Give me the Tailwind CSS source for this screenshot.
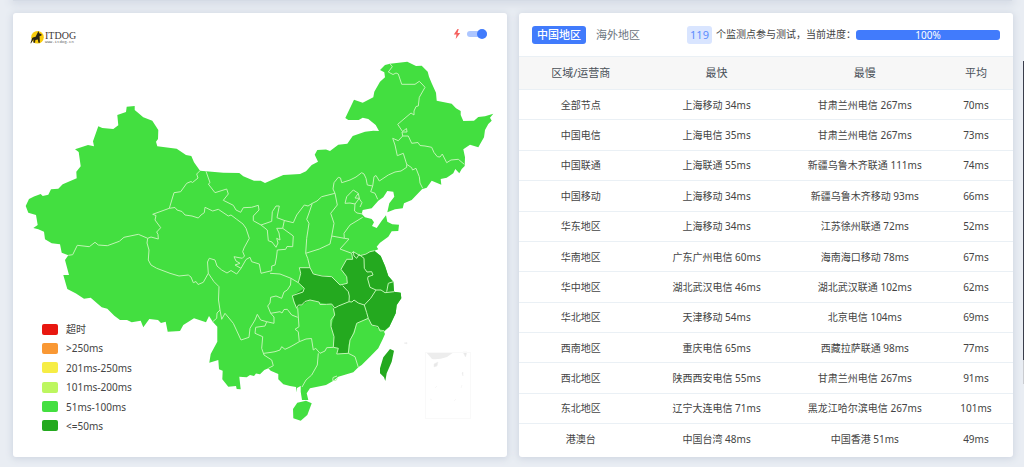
<!DOCTYPE html>
<html lang="zh-CN">
<head>
<meta charset="utf-8">
<meta name="viewport" content="width=device-width, initial-scale=1">
<title>ITDOG</title>
<script src="https://cdn.jsdelivr.net/npm/@tailwindcss/browser@4"></script>
</head>
<body class="relative min-h-screen overflow-x-hidden bg-[#e9edf3] font-['Noto_Sans','Noto_Sans_CJK_SC',sans-serif] text-[#444]">
<div class="mr-3 ml-[13px] h-px bg-[#d5dbe5] shadow-[0_0_8px_2px_#c6cedb]"></div>
<main class="mt-3 mr-[11px] mb-2 ml-[13px] grid grid-cols-2 gap-3">
  <section class="relative rounded-[3px] bg-white shadow-[0_1px_7px_1px_#cfd6e1]" aria-label="地图">
    <svg class="block w-full" viewBox="13 13 494 444" role="img" aria-label="中国地图">
      <g fill="#43df40">
        <path d="M25.7 206L29 199L34 196.500L40.700 194L42.700 196L48.300 194.700L51 189.300L58.300 188.700L62.700 184.300L76.700 178.300L76.300 171.700L80.700 166.300L78.700 152L75 149.300L88 145L94 146.300L93 141.300L98.300 126.300L102.300 128L113.300 129L118.300 125.300L117.300 115L126 112L126.700 106.700L134.700 106L134.700 110L143.300 117.300L152.300 120.700L158.300 130L158 139L156 141.700L157.300 146.300L176.700 148.700L186 155L191.300 156L194 162.300L200 170.700L206 171.300L223.300 172.700L239.300 173L243.300 176.300L254 180.700L260.700 180.700L265 183L283.300 175L300 174L306 171.300L311.700 165L318 161.700L314.700 154.700L317.300 150L326 149.500L330 151L338.300 144.700L347.300 143.700L352.700 136L365 131.700L373.300 130.700L379 131L375.700 125L368.300 119L362.700 117.700L358.700 120L348.300 120L345.300 118L354 99.700L362.700 102.700L373.300 97.300L374.300 91.700L380 81.700L385 77.300L384.300 72.300L380 70L385 65L390 63.700L407.300 61.700L416 66L421.700 65.700L427.700 71.700L429 76.700L431.700 83.300L436 92.700L436.700 100.700L446.700 102.700L451.700 103.700L456 108.300L460.700 111L460.700 115L463.300 121L474 120.700L478.300 117L485 116.300L493.300 113.700L490 117.700L491.700 120.700L488.300 124L485 130L484 137.300L478.300 147.300L470 144.700L463.300 149.300L465 157.300L464.700 166L461.700 169L459.300 173.300L455.300 169L453.300 173.300L446.700 177.700L440.700 179L441.300 184.700L431.700 180.700L426.700 187.700L422 189.300L411.700 200L404 203.300L402.700 208.300L395 209.300L387.300 212.300L389.300 203.300L394.300 196.700L393.300 191.700L387.300 191L383.300 197.300L378.300 200.700L371.700 208.300L362.700 210L361.700 214L365 217.300L371.700 219L374 222.300L372 226L376.700 228L381.700 220.700L386 215.300L387.300 221.700L392.300 224.300L399 224.700L398.300 231L391.700 231.300L388.300 236.700L380 242.700L376.700 246.700L378.300 249.300L374.300 250.700L380.700 256L385 266L388.300 276L393.300 281.700L394 291.700L400.700 292.700L401.300 298.300L396.700 305L395.700 313.300L389.300 326.700L384 331.700L385 334L382.700 339.300L378.300 348.300L370 356.700L361.700 365L358.300 367.300L353.300 372.300L338.300 376.700L333 381L326 385L310 388.300L306.700 393.300L308.300 400L302 400L300.700 391.700L300.700 386L297 388L296.700 392.500L296 387L290 386L283.300 384.300L278.300 379.300L278.300 374L270.700 370.700L268.300 368.300L264.300 370L260 374.300L256 373.500L254 376L250 375L246.700 377.300L239.300 376.700L240.700 389.300L236.700 389L236 386L228.300 386.700L222.300 379.300L222.700 370.700L219 369.300L218.300 360L209.300 362.700L210.700 354L217.300 341.700L217.300 326.700L212.700 321.700L209 316L206 322.300L194 318.300L183.300 325L180 331L167.700 331.700L165.700 321.700L161 323L158 320L149.300 319L143.300 327.300L140.700 320.700L131.700 322.300L127 320L120 320L114.300 315.700L107.300 308.700L101.700 307.300L90.700 297.700L84 298.700L76 293.500L67.300 289L63.300 275L69 275L65 260L68.300 255.300L61.700 252.700L60 244.300L51.700 243.300L45 239.300L44 231.700L38.300 229.300L33.300 228L37.700 225L36 215L28.300 212.700Z"/>
        <path d="M297.300 402.700L306 400.700L311.700 403.300L307.300 415L300.700 420.700L293.300 418.300L293 409Z"/>
      </g>
      <g fill="#24a91f">
        <path d="M299.300 267.700L310 267.700L313.300 274L331.700 276.700L340 285L347.300 283.300L346.700 276.700L341 269.300L346.700 259.300L352.700 259.300L351.700 253.300L353.300 251.700L360 255.700L370 251.700L374.300 250.700L380.700 256L385 266L388.300 276L393.300 281.700L394 291.700L400.700 292.700L401.300 298.300L396.700 305L395.700 313.300L389.300 326.700L384 330.700L371.700 325L368.300 318.300L356.700 323.300L348.300 345L348.300 353.300L336.700 354L338.300 348.300L333.300 347.300L334 336.700L331 326.700L334.700 315L333.300 308.300L331.700 304L326.700 304.300L310 300L301.700 305L296.700 308.300L292.300 295.700L304.300 288.300L298.300 282.700L300.700 273.300Z"/>
        <path d="M390 349L394 350.700L391.700 361.700L386.700 373.300L385.300 381L384 377.300L380 373.300L380 368.300L383.300 357.300Z"/>
      </g>
      <g fill="none" stroke="#c0f5b4" stroke-linejoin="round">
        <!-- 新疆 / 西藏 / 青海 / 甘肃 -->
        <path d="M68.300 255.300L72.700 254.700L77.300 245.300L89.300 246.700L95 242.300L98.300 245L107.300 245.700L119.300 241.300L124 237.300L138.300 234.300L147.700 238.300L151 237L158.300 239L158 234.500L156.700 232L160.700 227.700L155 220L156 215.500L152.700 214.300L169.300 208.300L174 192.700L180.700 191.700L186.700 183.300L191 181.500L192.500 182.500L198 178L196.700 174L200 170.700"/>
        <path d="M147.700 238.300L147 243L149 250L148.300 260L151 265L156.700 268.300L170 273.300L179 276L188.300 275L191 277L193.300 282.700L196 281.500L198 284.500L203.300 282.300L208.300 273.300L214 281.700L219 286.700L218.500 300L220 310L217 313L216.700 318.300L212.700 321.700"/>
        <path d="M169.300 208.300L175 207.500L177 210L182 211.500L185 215L192 216L198.300 218L201 215L204.300 212.700L205 207.300L212.700 211L218.300 209.300L228.300 216L231 215L236.700 219.300L243 224L246 228.300L249.300 238.300L244 248L242.700 251.700L244.500 256L242.300 258.300L234 256.700L236 261L240 263.300L235 265L241 268.300L236.700 274L231 270.500L227 273L221.700 270L217 266L215 260L209.300 258.300L207.500 262L208.300 273.300"/>
        <!-- 内蒙古 -->
        <path d="M206 171.300L210 182.700L208.300 184L215 192.700L226.700 189L228.300 194L223.300 200.300L233.300 205.300L236 210L240.700 212.300L243.300 207.700L251.700 207.300L258.300 205.300L259 210L253.300 216L253.300 220.700L261 225L271.700 221.300L272.300 211.700L276 206L279.300 206L277 217.700L285 220.700L293.300 222.700L296.700 215L304.300 205L308 206L312.300 203.300L317 201L321.700 196.700L335 193.300L333 189L334 182.700L338.300 177.300L340.500 178L341.700 182.700L350 180L356 177L361.700 172.700L364 174L366 178.300L367.300 185L372.700 186L374 176.700L376 175.500L379.300 181L388.300 175L395 172L401 171L406.700 167.300L406.700 164.300L403.300 153.300L397.300 155.700L395 145L392.700 138.300L398.300 140.700L402.700 136L402 132L407 132L406.500 128.500L402.500 131.500L397.700 124.300L411 113L414 115L414 111L416 106.500L418.300 106L419.300 97.300L425 87.300L422 84L419.300 81.300L415 84.300L401.700 84.300L398.300 74L396 73L393 74.500L388.300 72L392.300 66.700L390 63.700"/>
        <!-- 东北 -->
        <path d="M402.700 136L408.300 136L411.700 143.300L418 142.500L420 145.500L425 146L431.700 147.300L434 152.500L437.300 156.700L440 157L442.300 154L446.700 162.700L451 160L458.300 159.300L464.300 164.300M406.700 164.300L411.700 167.700L412.500 170L416 168.300L419.300 176.700L420 183L422.700 188.300M372.700 186L370.700 191.700L375 193.300L377.700 199.300"/>
        <!-- 甘肃 / 宁夏 / 陕西 / 四川 -->
        <path d="M261 225L267.300 230L268.300 240.700L272 242L276 247.300L278 243L276.700 238.300L280 240L279 233L276.700 228.300L282.700 228.300L293.300 236L292.700 246.700L287 246.500L285.700 249.300L277.300 250L276.500 257L275 265L271.700 266L271.700 270.700L261 273.300L259.300 264L251.700 261.700L250 257.300L246 259.500L241 268.300M282.700 228.300L284.300 220.700M270 273.300L280 274L291 278.300L298.300 282.700M312.300 203.300L309 213L306.700 219.300L309 223.300L306.700 238.300L305.700 253.300L319.300 249L330 244L331.700 236"/>
        <!-- 华北 / 山东 / 河南 -->
        <path d="M335 193.300L337.300 205L330.700 213.300L334 223.300L331.700 236L344.300 238.300L344 233.300L350 225L362.700 217.300M344.300 238.300L349 239L340 249L351.700 253.300M345 203.300L346.700 196.700L353.300 190L358.300 193.300L355 198L359.300 198.300L355 204L350 203ZM358.300 193.300L359.500 199L362 202.700L360 207M355 204L354.500 211L357 213L362.700 214"/>
        <path d="M351.700 253.300L353.300 251.700L360 255.700L366 254L370 251.700L374.300 250.700M351.700 253.300L352.700 259.300L346.700 259.300L341 269.300L346.700 276.700L347.300 283.300L340 285L331.700 276.700L322 276L313.300 274L310 267.700L307.700 258.300L305.700 253.300M310 267.700L299.300 267.700L300.700 273.300L298.300 282.700"/>
        <!-- 华东 / 华中 -->
        <path d="M298.300 282.700L304.300 288.300L303 292L292.300 295.700L294 302L296.700 308.300L298.500 305L301.700 305L305 301.500L310 300L319 302L320 304.500L326.700 304.300L331.700 304L334.700 308L338.300 306L349 301.700L349.300 296L348.300 291.700L342.700 285.700M349 301.700L352 302L354 300L358.300 303L364.300 305L370.700 298.300L376 290L381 290L385 292.700L394 291.700M386.700 291.700L388.300 283.300L393.300 281.700"/>
        <path d="M353.300 251.700L354 256L356.700 258.300L359 254.500L364 258.300L364.300 268.300L367 272L371.700 271.700L373 275L368 276.700L367.700 279L370 287.300L376 290M364.300 305L366.700 312.700L368.300 318.300L371.700 325L378 326.500L380 331L384 330.700M368.300 318.300L362 321L356.700 323.300L354 333L350 340L348.300 353.300L355 356.700L358.300 367.300"/>
        <path d="M333.300 308.300L334.700 315L331 320L331 326.700L334 336.700L333.300 347.300L338.300 348.300L336.700 354L348.300 353.300M333.300 347.300L326.700 347.700L325 351L320 353.300L315.700 348.300L313.300 350L311.500 338.500L306 339L299.300 341.700L298.300 331.700L295 329.300L299 326.700L297.700 308.300"/>
        <!-- 西南 / 华南 -->
        <path d="M291 278.300L290.500 285L287.300 290L284 292L281.700 298.300L276 296L270.700 297.300L270 303L267.700 306L270.700 313.300L280 311.700L282 313L284 309.500L287.300 309.300L291.700 315L297.700 317.300M270.700 313.300L274 317L274 323.300L266.700 321.700L260.700 320L257.300 314.300L255 320L250 328.300L249 337.300L241 340L233.300 323.300L225 313.300L221.700 319.300L220 310M266.700 321.700L265 326L255.700 327.300L255 333.300L262.700 336.700L261.700 348.300L264 355L271.700 360L273.300 365.700L268.300 368.300M264 353.300L270 352.500L275 351.700L280 350L281.700 346.700L285 349.300L290 347L299.300 341.700M318.300 353.300L317.300 365L311.700 375L306 380L302 387M337 376L333 377.500L332.700 380.500L336 380.500L337.300 378"/>
      </g>
      <path d="M426 352H454L447 357Q438 360 432 359Z" fill="#ededed"/>
      <path d="M463 352H467L465.500 357ZM434 364L438 362L437 366L434 367ZM404 343L407 342.500V344ZM462 373L463 372V376ZM435 388L437 386M461 388L462 385M454 401L456 399M430 399L432 400" fill="#e8e8e8" stroke="#eee" stroke-width=".5"/>
      <rect x="425.500" y="352.500" width="45" height="66" fill="none" stroke="#f9f9f9"/>
      <!-- 标志 -->
      <circle cx="37.500" cy="37.300" r="6.300" fill="#f9cc0b"/>
      <path d="M38.500 31l.7 2.300 2.400.9-.3 1.500-1.700.2.300 6.900h-1.500l-.5-3.200-2.500.3-.4 2.900h-1.600l.2-3.600-1 1.500-1.600 2.700-.5-.3 1.700-5 .7-.7 2.700-.7Z" fill="#2b2413"/>
      <text x="45" y="39" font-family="Liberation Serif, serif" font-size="10" fill="#3d3737">ITDOG</text>
      <text x="45" y="43" font-family="Liberation Mono, monospace" font-size="4" fill="#666">www.itdog.cn</text>
    </svg>
    <label class="absolute top-4 right-5 flex cursor-pointer items-center gap-1.5">
      <svg class="h-2.5 w-2" viewBox="0 0 8 10" aria-hidden="true"><path d="M4.500 0L.8 5.600H3.500L2.700 10L7.200 4H4.500L5.700 0Z" fill="#f5615f"/></svg>
      <span class="relative flex h-2.5 w-5 items-center">
        <input type="checkbox" checked aria-label="闪电模式" class="peer absolute inset-0 m-0 cursor-pointer appearance-none rounded-full">
        <span class="pointer-events-none h-1.5 w-full rounded-full bg-[#adc6ff]"></span>
        <span class="pointer-events-none absolute right-0 size-2.5 rounded-full bg-[#417bfc]"></span>
      </span>
    </label>
    <ul class="absolute bottom-[23px] left-[29px] flex h-[113px] flex-col justify-between text-[10px] leading-4">
      <li class="flex items-center gap-2"><span class="h-[11px] w-4 rounded-[2px] bg-[#e81710]"></span>超时</li>
      <li class="flex items-center gap-2"><span class="h-[11px] w-4 rounded-[2px] bg-[#f99834]"></span>&gt;250ms</li>
      <li class="flex items-center gap-2"><span class="h-[11px] w-4 rounded-[2px] bg-[#f6ed44]"></span>201ms-250ms</li>
      <li class="flex items-center gap-2"><span class="h-[11px] w-4 rounded-[2px] bg-[#bdf65f]"></span>101ms-200ms</li>
      <li class="flex items-center gap-2"><span class="h-[11px] w-4 rounded-[2px] bg-[#43df40]"></span>51ms-100ms</li>
      <li class="flex items-center gap-2"><span class="h-[11px] w-4 rounded-[2px] bg-[#24a91f]"></span>&lt;=50ms</li>
    </ul>
  </section>

  <section class="flex flex-col overflow-hidden rounded-[3px] bg-white pb-[3px] shadow-[0_1px_7px_1px_#cfd6e1]">
    <header class="flex h-[43px] shrink-0 items-center px-[13px]">
      <button type="button" class="h-[18px] w-[54px] rounded-[3px] bg-[#417bfc] text-[11px] leading-[18px] font-medium text-white">中国地区</button>
      <button type="button" class="ml-2.5 h-[18px] text-[11px] leading-[18px] text-[#6c757d]">海外地区</button>
      <span class="ml-[47px] h-[18px] w-[25px] shrink-0 rounded-[3px] bg-[#d9e5ff] text-center text-[11px] leading-[18px] text-[#5b8cfd]">119</span>
      <span class="ml-1 shrink-0 text-[10px] whitespace-nowrap">个监测点参与测试，当前进度：</span>
      <div role="progressbar" aria-label="当前进度" aria-valuenow="100" aria-valuemin="0" aria-valuemax="100" class="h-2.5 flex-1 rounded-[3px] bg-[#417bfc] text-center text-[10px] leading-[10px] text-white">100%</div>
    </header>
    <table class="w-full flex-1 table-fixed border-collapse text-center text-[10px] leading-4">
      <thead>
        <tr class="h-[33px] border-y border-[#eaf0f5] bg-[#f7f7f7] text-[11px] text-[#495057]">
          <th scope="col" class="w-[25%] font-normal">区域/运营商</th><th scope="col" class="w-[30%] font-normal">最快</th><th scope="col" class="w-[30%] font-normal">最慢</th><th scope="col" class="w-[15%] font-normal">平均</th>
        </tr>
      </thead>
      <tbody class="divide-y divide-[#eaf0f5]">
        <tr class="h-[30px]"><td>全部节点</td><td>上海移动 34ms</td><td>甘肃兰州电信 267ms</td><td>70ms</td></tr>
        <tr class="h-[30px]"><td>中国电信</td><td>上海电信 35ms</td><td>甘肃兰州电信 267ms</td><td>73ms</td></tr>
        <tr class="h-[30px]"><td>中国联通</td><td>上海联通 55ms</td><td>新疆乌鲁木齐联通 111ms</td><td>74ms</td></tr>
        <tr class="h-[30px]"><td>中国移动</td><td>上海移动 34ms</td><td>新疆乌鲁木齐移动 93ms</td><td>66ms</td></tr>
        <tr class="h-[30px]"><td>华东地区</td><td>上海移动 34ms</td><td>江苏徐州联通 72ms</td><td>52ms</td></tr>
        <tr class="h-[30px]"><td>华南地区</td><td>广东广州电信 60ms</td><td>海南海口移动 78ms</td><td>67ms</td></tr>
        <tr class="h-[30px]"><td>华中地区</td><td>湖北武汉电信 46ms</td><td>湖北武汉联通 102ms</td><td>62ms</td></tr>
        <tr class="h-[30px]"><td>华北地区</td><td>天津移动 54ms</td><td>北京电信 104ms</td><td>69ms</td></tr>
        <tr class="h-[30px]"><td>西南地区</td><td>重庆电信 65ms</td><td>西藏拉萨联通 98ms</td><td>77ms</td></tr>
        <tr class="h-[30px]"><td>西北地区</td><td>陕西西安电信 55ms</td><td>甘肃兰州电信 267ms</td><td>91ms</td></tr>
        <tr class="h-[30px]"><td>东北地区</td><td>辽宁大连电信 71ms</td><td>黑龙江哈尔滨电信 267ms</td><td>101ms</td></tr>
        <tr class="h-[30px]"><td>港澳台</td><td>中国台湾 48ms</td><td>中国香港 51ms</td><td>49ms</td></tr>
      </tbody>
    </table>
  </section>
</main>
<div class="absolute top-[61px] right-0 h-[323px] w-px border-b-[24px] border-[#c9cbd0] bg-[#3a3d4c]"></div>
</body>
</html>
